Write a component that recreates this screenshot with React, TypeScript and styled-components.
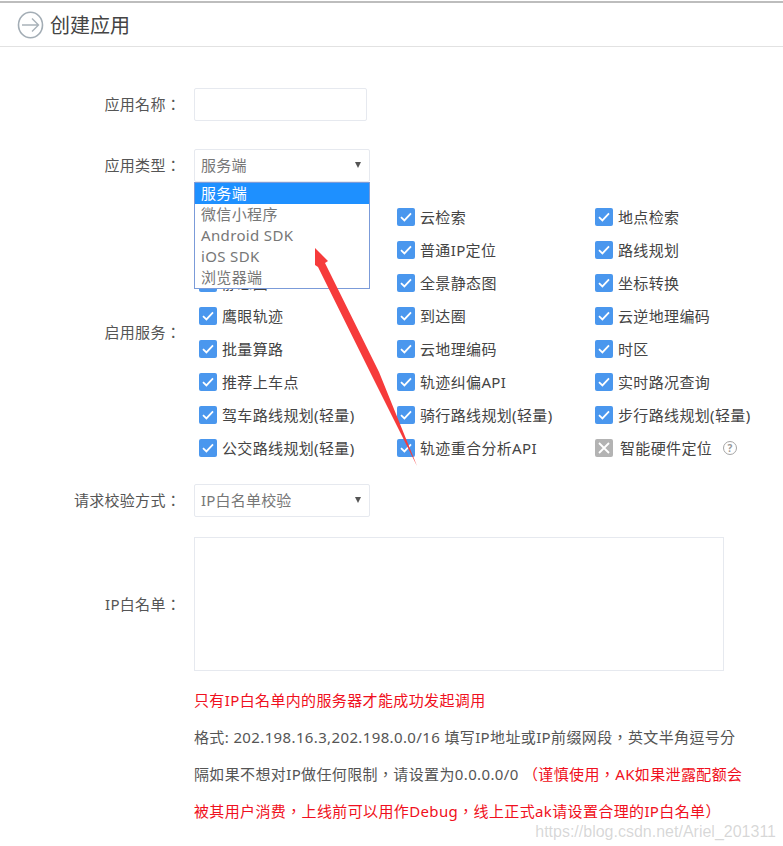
import React from 'react'
import styled, { createGlobalStyle } from 'styled-components'

const firstColumn = ['天气查询', '智能定位', '静态图', '鹰眼轨迹', '批量算路', '推荐上车点', '驾车路线规划(轻量)', '公交路线规划(轻量)']
const secondColumn = ['云检索', '普通IP定位', '全景静态图', '到达圈', '云地理编码', '轨迹纠偏API', '骑行路线规划(轻量)', '轨迹重合分析API']
const thirdColumn = ['地点检索', '路线规划', '坐标转换', '云逆地理编码', '时区', '实时路况查询', '步行路线规划(轻量)']
const typeOptions = ['服务端', '微信小程序', 'Android SDK', 'iOS SDK', '浏览器端']

const CheckItem = ({ label }: { label: string }) => (
	<Service>
		<CheckBox>
			<svg width="12" height="10" viewBox="0 0 12 10" fill="none">
				<path d="M1 5.2 4.4 8.4 11 1.4" stroke="#fff" strokeWidth="1.8" />
			</svg>
		</CheckBox>
		{label}
	</Service>
)

const App: React.FC = () => {
	return (
		<Page>
			<GlobalStyle />
			<Header>
				<svg width="27" height="28" viewBox="0 0 27 28" fill="none">
					<ellipse cx="13.5" cy="14" rx="12" ry="12.8" stroke="#a3adb5" strokeWidth="1.6" />
					<path d="M5 14H21M15 7.5 21.5 14 15 20.5" stroke="#a9b2b9" strokeWidth="1.4" />
				</svg>
				<Title>创建应用</Title>
			</Header>
			<Form>
				<NameRow>
					<Label>应用名称：</Label>
					<TextInput />
				</NameRow>
				<TypeRow>
					<Label>应用类型：</Label>
					<SelectWrap>
						<Select>
							<SelectText>服务端</SelectText>
							<Caret />
						</Select>
						<OptionList>
							{typeOptions.map((option, i) => (
								<OptionItem key={option} $active={i === 0}>
									{option}
								</OptionItem>
							))}
						</OptionList>
					</SelectWrap>
				</TypeRow>
				<ServicesRow>
					<Label>启用服务：</Label>
					<ServiceGrid>
						<ServiceColumn>
							{firstColumn.map(item => (
								<CheckItem key={item} label={item} />
							))}
						</ServiceColumn>
						<ServiceColumn>
							{secondColumn.map(item => (
								<CheckItem key={item} label={item} />
							))}
						</ServiceColumn>
						<ServiceColumn>
							{thirdColumn.map(item => (
								<CheckItem key={item} label={item} />
							))}
							<DisabledService>
								<DisabledBox>
									<svg width="12" height="12" viewBox="0 0 12 12" fill="none">
										<path d="M1 1 11 11M11 1 1 11" stroke="#fff" strokeWidth="1.8" />
									</svg>
								</DisabledBox>
								智能硬件定位
								<HelpMark>?</HelpMark>
							</DisabledService>
						</ServiceColumn>
					</ServiceGrid>
				</ServicesRow>
				<Row>
					<Label>请求校验方式：</Label>
					<Select>
						<SelectText>IP白名单校验</SelectText>
						<Caret />
					</Select>
				</Row>
				<Row>
					<Label>IP白名单：</Label>
					<WhiteList />
				</Row>
				<Notes>
					<Warning>只有IP白名单内的服务器才能成功发起调用</Warning>
					<div>格式: 202.198.16.3,202.198.0.0/16 填写IP地址或IP前缀网段，英文半角逗号分</div>
					<div>
						隔如果不想对IP做任何限制，请设置为0.0.0.0/0 <Warning>（谨慎使用，AK如果泄露配额会</Warning>
					</div>
					<Warning>被其用户消费，上线前可以用作Debug，线上正式ak请设置合理的IP白名单）</Warning>
				</Notes>
			</Form>
			<ArrowMark width="783" height="846" viewBox="0 0 783 846">
				<polygon points="315,248 328,261 325,263 379,372 417,466 371,374 318,267 315,265" fill="#f63b3b" />
			</ArrowMark>
			<Watermark>https://blog.csdn.net/Ariel_201311</Watermark>
		</Page>
	)
}

export default App

const GlobalStyle = createGlobalStyle`
	html, body {
		margin: 0;
		background: #fff;
	}
	* {
		box-sizing: border-box;
	}
`

const Page = styled.div`
	position: relative;
	width: 783px;
	height: 846px;
	overflow: hidden;
	border-top: 2px solid #bdbdbd;
	margin-top: 1px;
	font-family: 'Noto Sans', 'Noto Sans CJK SC', sans-serif;
	color: #555;
`

const Header = styled.header`
	display: flex;
	align-items: center;
	height: 44px;
	padding: 0 0 0 17px;
	gap: 6px;
	border-bottom: 1px solid #e2e2e2;
`

const Title = styled.h1`
	margin: 0;
	font-size: 20px;
	font-weight: 400;
	color: #444;
`

const Form = styled.div`
	display: flex;
	flex-direction: column;
	padding-top: 41px;
`

const Row = styled.div`
	display: flex;
	align-items: center;
	margin-bottom: 20px;
`

const NameRow = styled(Row)`
	margin-bottom: 28px;
`

const TypeRow = styled(Row)`
	margin-bottom: 18px;
`

const ServicesRow = styled(Row)`
	margin-bottom: 20px;
`

const Label = styled.label`
	flex: 0 0 181px;
	margin-right: 13px;
	padding-bottom: 2px;
	text-align: right;
	font-family: 'Noto Sans', 'Noto Sans CJK TC', sans-serif;
	font-size: 15px;
	letter-spacing: 0.3px;
	color: #555;
`

const TextInput = styled.input`
	width: 173px;
	height: 33px;
	border: 1px solid #e6e9ef;
	border-radius: 2px;
	outline: none;
`

const SelectWrap = styled.div`
	position: relative;
`

const Select = styled.div`
	position: relative;
	display: flex;
	align-items: center;
	width: 176px;
	height: 33px;
	padding-left: 6px;
	border: 1px solid #e6e9ef;
	border-radius: 2px;
	font-size: 15px;
	letter-spacing: 0.2px;
	color: #777;
`

const SelectText = styled.span`
	padding-bottom: 2px;
`

const Caret = styled.span`
	position: absolute;
	right: 8px;
	top: 12px;
	border-left: 3.5px solid transparent;
	border-right: 3.5px solid transparent;
	border-top: 6px solid #555;
`

const OptionList = styled.div`
	position: absolute;
	z-index: 2;
	top: 33px;
	left: 0;
	width: 176px;
	height: 107px;
	background: #fff;
	border: 1px solid #7b9bd9;
`

const OptionItem = styled.div<{ $active: boolean }>`
	height: 21px;
	padding-left: 6px;
	font-size: 15px;
	letter-spacing: 0.35px;
	line-height: 21px;
	color: ${p => (p.$active ? '#fff' : '#777')};
	background: ${p => (p.$active ? '#1e90ff' : 'transparent')};
`

const ServiceGrid = styled.div`
	display: grid;
	grid-template-columns: 198px 198px auto;
	padding-left: 5px;
`

const ServiceColumn = styled.div`
	display: flex;
	flex-direction: column;
`

const Service = styled.div`
	display: flex;
	align-items: center;
	gap: 5px;
	height: 33px;
	font-size: 15px;
	letter-spacing: 0.35px;
	white-space: nowrap;
	color: #444;
`

const DisabledService = styled(Service)`
	gap: 7px;
`

const CheckBox = styled.span`
	display: flex;
	align-items: center;
	justify-content: center;
	width: 18px;
	height: 18px;
	border-radius: 2px;
	background: #4a97ee;
`

const DisabledBox = styled(CheckBox)`
	background: #b3b3b3;
`

const HelpMark = styled.span`
	display: flex;
	align-items: center;
	justify-content: center;
	width: 14px;
	height: 14px;
	margin-left: 4px;
	border: 1.5px solid #a5a5a5;
	border-radius: 50%;
	font-size: 10px;
	font-weight: 700;
	color: #999;
`

const WhiteList = styled.textarea`
	width: 530px;
	height: 134px;
	border: 1px solid #e6e9ef;
	resize: none;
	outline: none;
`

const Notes = styled.div`
	display: flex;
	flex-direction: column;
	margin: -9px 0 0 194px;
	font-family: 'Noto Sans', 'Noto Sans CJK TC', sans-serif;
	font-size: 15px;
	letter-spacing: 0.37px;
	line-height: 37px;
	white-space: nowrap;
	color: #555;
`

const Warning = styled.span`
	color: #f01020;
`

const ArrowMark = styled.svg`
	position: absolute;
	z-index: 3;
	top: -3px;
	left: 0;
	pointer-events: none;
`

const Watermark = styled.div`
	position: absolute;
	z-index: 3;
	right: 7px;
	bottom: 6px;
	font-family: 'Liberation Sans', sans-serif;
	font-size: 16px;
	color: rgba(150, 150, 150, 0.38);
`
